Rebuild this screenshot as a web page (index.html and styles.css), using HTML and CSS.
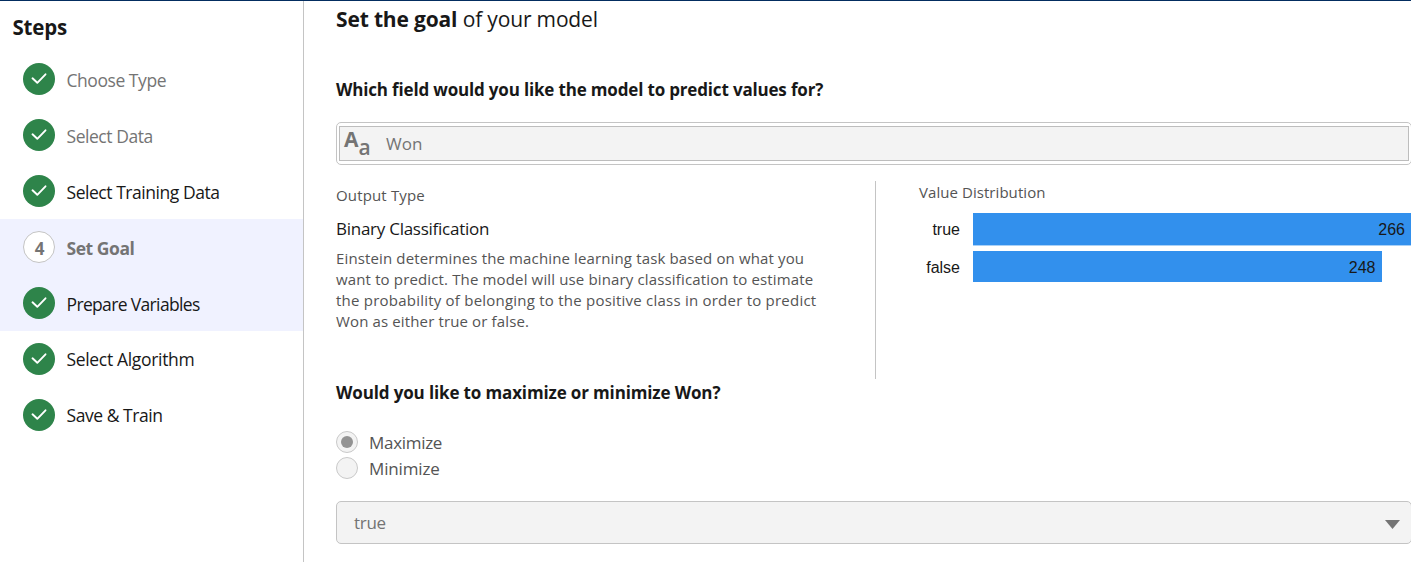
FILE: index.html
```html
<!DOCTYPE html>
<html lang="en">
<head>
<meta charset="utf-8">
<title>Set the goal of your model</title>
<link rel="stylesheet" href="styles.css">
</head>
<body>
<div class="app">
  <nav class="sidebar">
    <h2 class="sidebar-title">Steps</h2>
    <ul class="steps">
      <li class="step muted"><span class="badge"><svg viewBox="0 0 32 32"><path d="M9.500 15.300l4.800 4.500 8.200-8.500"/></svg></span><span class="label">Choose Type</span></li>
      <li class="step muted"><span class="badge"><svg viewBox="0 0 32 32"><path d="M9.500 15.300l4.800 4.500 8.200-8.500"/></svg></span><span class="label">Select Data</span></li>
      <li class="step"><span class="badge"><svg viewBox="0 0 32 32"><path d="M9.500 15.300l4.800 4.500 8.200-8.500"/></svg></span><span class="label">Select Training Data</span></li>
      <li class="step active current"><span class="badge number">4</span><span class="label">Set Goal</span></li>
      <li class="step active"><span class="badge"><svg viewBox="0 0 32 32"><path d="M9.500 15.300l4.800 4.500 8.200-8.500"/></svg></span><span class="label tight">Prepare Variables</span></li>
      <li class="step late"><span class="badge"><svg viewBox="0 0 32 32"><path d="M9.500 15.300l4.800 4.500 8.200-8.500"/></svg></span><span class="label loose">Select Algorithm</span></li>
      <li class="step late"><span class="badge"><svg viewBox="0 0 32 32"><path d="M9.500 15.300l4.800 4.500 8.200-8.500"/></svg></span><span class="label">Save &amp; Train</span></li>
    </ul>
  </nav>
  <main class="main">
    <h1 class="title"><b>Set the goal</b> <span class="title-rest">of your model</span></h1>
    <h3 class="question q1">Which field would you like the model to predict values for?</h3>
    <div class="field">
      <div class="field-inner">
        <span class="type-icon"><span class="big-a">A</span><span class="small-a">a</span></span>
        <span class="field-value">Won</span>
      </div>
    </div>
    <section class="details">
      <div class="output">
        <div class="caption out-cap">Output Type</div>
        <div class="output-name">Binary Classification</div>
        <p class="description"><span class="d1">Einstein determines the machine learning task based on what you</span><br><span class="d2">want to predict. The model will use binary classification to estimate</span><br><span class="d3">the probability of belonging to the positive class in order to predict</span><br><span class="d4">Won as either true or false.</span></p>
      </div>
      <div class="distribution">
        <div class="caption dist-cap">Value Distribution</div>
        <div class="chart">
          <span class="bar-label">true</span><div class="bar bar-true">266</div>
          <span class="bar-label">false</span><div class="bar bar-false">248</div>
        </div>
      </div>
    </section>
    <h3 class="question q2">Would you like to maximize or minimize Won?</h3>
    <div class="radios">
      <div class="radio"><span class="dot checked"></span><span class="r1">Maximize</span></div>
      <div class="radio"><span class="dot"></span><span class="r2">Minimize</span></div>
    </div>
    <div class="select"><span class="select-value">true</span><svg class="arrow" viewBox="0 0 15 9"><path d="M0 0h15L7.500 9z"/></svg></div>
  </main>
</div>
</body>
</html>
```
FILE: styles.css
```css
* { box-sizing: border-box; }
body {
  margin: 0;
  background: #fff;
  color: #181818;
  font-family: "Open Sans", "Noto Sans", sans-serif;
  font-size: 17px;
  overflow: hidden;
}
h1, h2, h3, p, ul { margin: 0; padding: 0; }
.app {
  display: flex;
  height: 562px;
  border-top: 1px solid #032d60;
  white-space: nowrap;
  overflow: hidden;
}
.sidebar {
  flex: 0 0 304px;
  border-right: 1px solid #c4c4c4;
}
.sidebar-title {
  height: 50px;
  padding: 14px 0 0 12.500px;
  font-size: 20.500px;
  line-height: 25px;
  letter-spacing: -0.2px;
}
.steps { list-style: none; }
.step {
  display: flex;
  align-items: center;
  height: 56px;
  padding-left: 23px;
  gap: 11.500px;
}
.step.muted { color: #747474; }
.step.active { background: #f0f2ff; }
.step.current { color: #747474; font-weight: 700; }
.label { padding-top: 1px; font-size: 17.500px; line-height: 24px; letter-spacing: -0.45px; }
.label.tight { letter-spacing: -0.65px; }
.label.loose { letter-spacing: -0.33px; }
.late .label { padding: 0 0 1px; }
.badge {
  width: 32px;
  height: 32px;
  border-radius: 50%;
  background: #2e844a;
}
.badge svg { display: block; width: 32px; height: 32px; }
.badge path {
  fill: none;
  stroke: #fff;
  stroke-width: 1.9;
  stroke-linecap: round;
  stroke-linejoin: round;
}
.badge.number {
  display: flex;
  align-items: center;
  justify-content: center;
  padding: 2px 0 0 1px;
  background: #fff;
  border: 1px solid #c4c4c4;
}
.main { flex: none; width: 1107px; padding-left: 32px; }
.title {
  height: 74px;
  padding-top: 3px;
  font-size: 21px;
  font-weight: 400;
  line-height: 30px;
  letter-spacing: -0.16px;
}
.question { font-size: 17px; line-height: 28px; letter-spacing: -0.17px; }
.q1 { height: 47px; padding-top: 1px; }
.field {
  width: 1076px;
  height: 43px;
  padding: 3px 2px;
  border: 1px solid #c4c4c4;
  border-radius: 5px;
}
.field-inner {
  display: flex;
  align-items: center;
  width: 1070px;
  height: 35px;
  border: 1px solid #bdbdbd;
  background: #f3f3f3;
  color: #747474;
}
.type-icon {
  display: flex;
  width: 46px;
  height: 35px;
  padding-left: 4px;
  font-size: 21px;
  font-weight: 700;
  line-height: 27px;
}
.small-a { padding-top: 8px; font-weight: 600; }
.details { display: flex; height: 198px; margin-top: 16px; }
.output { width: 540px; border-right: 1px solid #c4c4c4; }
.caption { color: #545454; font-size: 15px; line-height: 20px; }
.out-cap { padding-top: 4px; letter-spacing: 0.15px; }
.output-name { margin-top: 12px; line-height: 24px; letter-spacing: -0.26px; }
.description { margin-top: 7px; color: #545454; font-size: 15px; line-height: 21px; }
.d1, .d4 { letter-spacing: 0.135px; }
.d2 { letter-spacing: 0.145px; }
.d3 { letter-spacing: 0.225px; }
.distribution { padding: 1px 0 0 43px; }
.dist-cap { letter-spacing: 0.06px; }
.chart {
  display: grid;
  grid-template-columns: 41px 438px;
  grid-template-rows: 33px 31px;
  gap: 5px 13px;
  margin-top: 11px;
  font: 16px/34px "Liberation Sans", Arial, sans-serif;
}
.bar-label { text-align: right; }
.bar { background: #3290ed; text-align: right; padding-right: 6px; }
.bar-true { border-bottom: 1px solid #a8d0f7; }
.bar-false { width: 408.500px; }
.q2 { height: 50px; letter-spacing: -0.14px; }
.radios { color: #545454; }
.radio { display: flex; align-items: center; gap: 11px; height: 26px; line-height: 26px; }
.radio span:last-child { padding-top: 1px; }
.r1 { letter-spacing: -0.3px; }
.r2 { letter-spacing: -0.15px; }
.dot {
  display: grid;
  place-items: center;
  width: 22px;
  height: 22px;
  border: 1px solid #c9c9c9;
  border-radius: 50%;
  background: #f3f3f3;
}
.checked::after { content: ""; width: 12px; height: 12px; border-radius: 50%; background: #939393; }
.select {
  display: flex;
  align-items: center;
  justify-content: space-between;
  width: 1076px;
  height: 43px;
  margin-top: 20px;
  padding: 0 11px 0 17px;
  border: 1px solid #c4c4c4;
  border-radius: 5px;
  background: #f3f3f3;
  color: #747474;
}
.select-value { letter-spacing: -0.3px; }
.arrow { width: 15px; height: 9px; fill: #747474; margin-top: 3px; }
```
